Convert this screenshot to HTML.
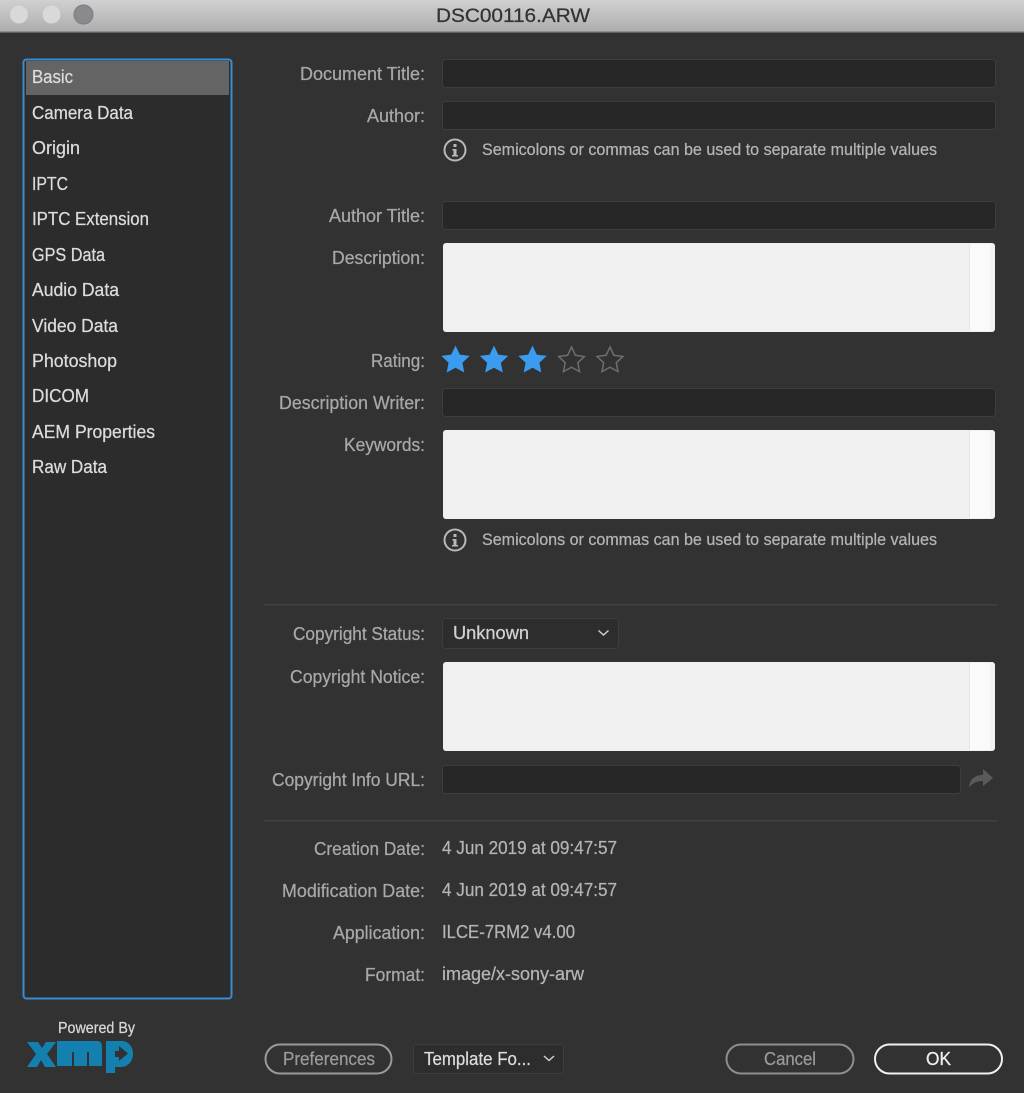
<!DOCTYPE html>
<html><head><meta charset="utf-8"><title>DSC00116.ARW</title>
<style>
html,body{margin:0;padding:0;background:#323232;width:1024px;height:1093px;overflow:hidden}
svg{display:block;font-family:"Liberation Sans",sans-serif;filter:blur(.35px)}
text{font-size:18px;stroke-width:.25px}
.s{fill:#dcdcdc;stroke:#dcdcdc}
.l{fill:#a8a8a8;stroke:#a8a8a8;text-anchor:end}
.v{fill:#b4b4b4;stroke:#b4b4b4}
.f{fill:#272727;stroke:#3d3d3d;stroke-width:1}
</style></head><body>
<svg width="1024" height="1093" viewBox="0 0 1024 1093" xmlns="http://www.w3.org/2000/svg">
<defs><linearGradient id="tb" x1="0" y1="0" x2="0" y2="1"><stop offset="0" stop-color="#d0d0d0"/><stop offset="1" stop-color="#aeaeae"/></linearGradient></defs>
<rect width="1024" height="1093" fill="#323232"/>
<rect width="1024" height="31" fill="url(#tb)"/>
<rect y="31" width="1024" height="1.5" fill="#8e8e8e"/>
<circle cx="19" cy="14.5" r="9" fill="#d9d9d9"/>
<circle cx="51.500" cy="14.500" r="9" fill="#d9d9d9"/>
<circle cx="83.500" cy="14.500" r="9.500" fill="#8a8a8e" stroke="#7d7d80"/>
<text x="436" y="22" textLength="154" lengthAdjust="spacingAndGlyphs" fill="#333" stroke="#333" style="font-size:19px">DSC00116.ARW</text>

<rect x="23.500" y="59.500" width="208" height="939" rx="3" fill="#2c2c2c" stroke="#3b8bd0" stroke-width="2"/>
<rect x="26" y="61" width="203" height="34" fill="#646464"/>
<text class="s" x="32" y="83" textLength="41" lengthAdjust="spacingAndGlyphs">Basic</text>
<text class="s" x="32" y="119" textLength="101" lengthAdjust="spacingAndGlyphs">Camera Data</text>
<text class="s" x="32" y="154" textLength="48" lengthAdjust="spacingAndGlyphs">Origin</text>
<text class="s" x="32" y="190" textLength="36" lengthAdjust="spacingAndGlyphs">IPTC</text>
<text class="s" x="32" y="225" textLength="117" lengthAdjust="spacingAndGlyphs">IPTC Extension</text>
<text class="s" x="32" y="261" textLength="73" lengthAdjust="spacingAndGlyphs">GPS Data</text>
<text class="s" x="32" y="296" textLength="87" lengthAdjust="spacingAndGlyphs">Audio Data</text>
<text class="s" x="32" y="332" textLength="86" lengthAdjust="spacingAndGlyphs">Video Data</text>
<text class="s" x="32" y="367" textLength="85" lengthAdjust="spacingAndGlyphs">Photoshop</text>
<text class="s" x="32" y="402" textLength="57" lengthAdjust="spacingAndGlyphs">DICOM</text>
<text class="s" x="32" y="438" textLength="123" lengthAdjust="spacingAndGlyphs">AEM Properties</text>
<text class="s" x="32" y="473" textLength="75" lengthAdjust="spacingAndGlyphs">Raw Data</text>

<text class="l" x="425" y="80" textLength="125" lengthAdjust="spacingAndGlyphs">Document Title:</text>
<text class="l" x="425" y="122" textLength="58" lengthAdjust="spacingAndGlyphs">Author:</text>
<text class="l" x="425" y="222" textLength="96" lengthAdjust="spacingAndGlyphs">Author Title:</text>
<text class="l" x="425" y="264" textLength="93" lengthAdjust="spacingAndGlyphs">Description:</text>
<text class="l" x="425" y="367" textLength="54" lengthAdjust="spacingAndGlyphs">Rating:</text>
<text class="l" x="425" y="409" textLength="146" lengthAdjust="spacingAndGlyphs">Description Writer:</text>
<text class="l" x="425" y="451" textLength="81" lengthAdjust="spacingAndGlyphs">Keywords:</text>
<text class="l" x="425" y="640" textLength="132" lengthAdjust="spacingAndGlyphs">Copyright Status:</text>
<text class="l" x="425" y="683" textLength="135" lengthAdjust="spacingAndGlyphs">Copyright Notice:</text>
<text class="l" x="425" y="786" textLength="153" lengthAdjust="spacingAndGlyphs">Copyright Info URL:</text>
<text class="l" x="425" y="855" textLength="111" lengthAdjust="spacingAndGlyphs">Creation Date:</text>
<text class="l" x="425" y="897" textLength="143" lengthAdjust="spacingAndGlyphs">Modification Date:</text>
<text class="l" x="425" y="939" textLength="92" lengthAdjust="spacingAndGlyphs">Application:</text>
<text class="l" x="425" y="981" textLength="60" lengthAdjust="spacingAndGlyphs">Format:</text>

<rect class="f" x="442.500" y="59.500" width="553" height="28" rx="3"/>
<rect class="f" x="442.500" y="101.500" width="553" height="28" rx="3"/>
<rect class="f" x="442.500" y="201.500" width="553" height="28" rx="3"/>
<rect class="f" x="442.500" y="388.500" width="553" height="28" rx="3"/>
<rect class="f" x="442.500" y="765.500" width="518" height="28" rx="3"/>

<g>
<rect x="443" y="243" width="552" height="89" rx="3" fill="#f0f0f0"/>
<rect x="969" y="244" width="21" height="87" fill="#fafafa"/><rect x="969" y="244" width="1" height="87" fill="#e6e6e6"/><rect x="990" y="244" width="4" height="87" fill="#f2f2f2"/>
</g>
<g>
<rect x="443" y="430" width="552" height="89" rx="3" fill="#f0f0f0"/>
<rect x="969" y="431" width="21" height="87" fill="#fafafa"/><rect x="969" y="431" width="1" height="87" fill="#e6e6e6"/><rect x="990" y="431" width="4" height="87" fill="#f2f2f2"/>
</g>
<g>
<rect x="443" y="662" width="552" height="89" rx="3" fill="#f0f0f0"/>
<rect x="969" y="663" width="21" height="87" fill="#fafafa"/><rect x="969" y="663" width="1" height="87" fill="#e6e6e6"/><rect x="990" y="663" width="4" height="87" fill="#f2f2f2"/>
</g>

<g fill="none" stroke="#b8b8b8" stroke-width="2">
<circle cx="455" cy="150" r="10.500"/>
<circle cx="455" cy="540" r="10.500"/>
</g>
<g fill="#b8b8b8">
<rect x="453.500" y="144" width="3" height="3"/><path d="M452.500 149h4v6h1.500v1.500h-6V155h1.500v-4.500h-1z"/>
<rect x="453.500" y="534" width="3" height="3"/><path d="M452.500 539h4v6h1.500v1.500h-6V545h1.500v-4.500h-1z"/>
</g>
<text class="v" x="482" y="155" textLength="455" lengthAdjust="spacingAndGlyphs" style="font-size:17px">Semicolons or commas can be used to separate multiple values</text>
<text class="v" x="482" y="545" textLength="455" lengthAdjust="spacingAndGlyphs" style="font-size:17px">Semicolons or commas can be used to separate multiple values</text>

<g fill="#3a9bef">
<path d="M455.500 345.500l4.300 9.100 9.900 1.300-7.300 6.800 1.900 9.800-8.800-4.800-8.800 4.800 1.900-9.800-7.300-6.800 9.900-1.300z"/>
<path d="M494 345.500l4.300 9.100 9.900 1.300-7.300 6.800 1.900 9.800-8.800-4.800-8.800 4.800 1.900-9.800-7.300-6.800 9.900-1.300z"/>
<path d="M532.500 345.500l4.300 9.100 9.900 1.300-7.300 6.800 1.900 9.800-8.800-4.800-8.800 4.800 1.900-9.800-7.300-6.800 9.900-1.300z"/>
</g>
<g fill="none" stroke="#6e6e6e" stroke-width="1.500">
<path d="M571.500 347l3.900 8.300 9 1.200-6.600 6.200 1.700 8.900-8-4.400-8 4.400 1.700-8.900-6.600-6.200 9-1.200z"/>
<path d="M610 347l3.900 8.300 9 1.200-6.600 6.200 1.700 8.900-8-4.400-8 4.400 1.700-8.900-6.600-6.200 9-1.200z"/>
</g>

<rect x="264" y="604" width="733" height="1.500" fill="#414141"/>
<rect x="264" y="820" width="733" height="1.500" fill="#414141"/>

<rect x="442.500" y="618.500" width="176" height="30" rx="3" fill="#2d2d2d" stroke="#3d3d3d"/>
<text x="453" y="639" textLength="76" lengthAdjust="spacingAndGlyphs" fill="#d2d2d2" stroke="#d2d2d2">Unknown</text>
<path d="M598.500 630.500l5 4.500 5-4.500" fill="none" stroke="#cfcfcf" stroke-width="1.500"/>

<path d="M969 787c1-9 7-12 14-12v-6l10 9-10 8v-5c-6 0-10 2-14 6z" fill="#5a5a5a"/>

<text class="v" x="442" y="854" textLength="175" lengthAdjust="spacingAndGlyphs">4 Jun 2019 at 09:47:57</text>
<text class="v" x="442" y="896" textLength="175" lengthAdjust="spacingAndGlyphs">4 Jun 2019 at 09:47:57</text>
<text class="v" x="442" y="938" textLength="133" lengthAdjust="spacingAndGlyphs">ILCE-7RM2 v4.00</text>
<text class="v" x="442" y="980" textLength="142" lengthAdjust="spacingAndGlyphs">image/x-sony-arw</text>

<text x="58" y="1033" textLength="77" lengthAdjust="spacingAndGlyphs" fill="#d8d8d8" stroke="#d8d8d8" style="font-size:16px">Powered By</text>
<g fill="#1480b0">
<path d="M27 1042H38L42 1048L46 1042H56L47 1054L56 1067H45L41 1060L37 1067H27L36 1054Z"/>
<path d="M57 1041H97Q102 1041 102 1047V1066H89V1052H87V1066H74V1052H72V1066H57Z"/>
<path d="M106 1041H121C129 1041 133 1047 133 1054C133 1061 128 1067 121 1067H115V1073H106Z"/>
</g>
<path d="M115 1051H119V1046L128 1053.500L119 1061V1057H115Z" fill="#323232"/>

<rect x="265.500" y="1044.500" width="126" height="29" rx="14.500" fill="none" stroke="#9a9a9a" stroke-width="2"/>
<text x="283" y="1065" textLength="92" lengthAdjust="spacingAndGlyphs" fill="#9a9a9a" stroke="#9a9a9a">Preferences</text>
<rect x="413.500" y="1044.500" width="150" height="29" rx="3" fill="#2d2d2d" stroke="#3d3d3d"/>
<text x="424" y="1065" textLength="107" lengthAdjust="spacingAndGlyphs" fill="#dcdcdc" stroke="#dcdcdc">Template Fo...</text>
<path d="M544 1056l5 4.500 5-4.500" fill="none" stroke="#cfcfcf" stroke-width="1.500"/>
<rect x="726.500" y="1044.500" width="127" height="29" rx="14.500" fill="none" stroke="#8e8e8e" stroke-width="2"/>
<text x="764" y="1065" textLength="52" lengthAdjust="spacingAndGlyphs" fill="#9a9a9a" stroke="#9a9a9a">Cancel</text>
<rect x="875" y="1044.500" width="127" height="29" rx="14.500" fill="none" stroke="#f0f0f0" stroke-width="2"/>
<text x="926" y="1065" textLength="25" lengthAdjust="spacingAndGlyphs" fill="#f0f0f0" stroke="#f0f0f0">OK</text>
</svg>
</body></html>
